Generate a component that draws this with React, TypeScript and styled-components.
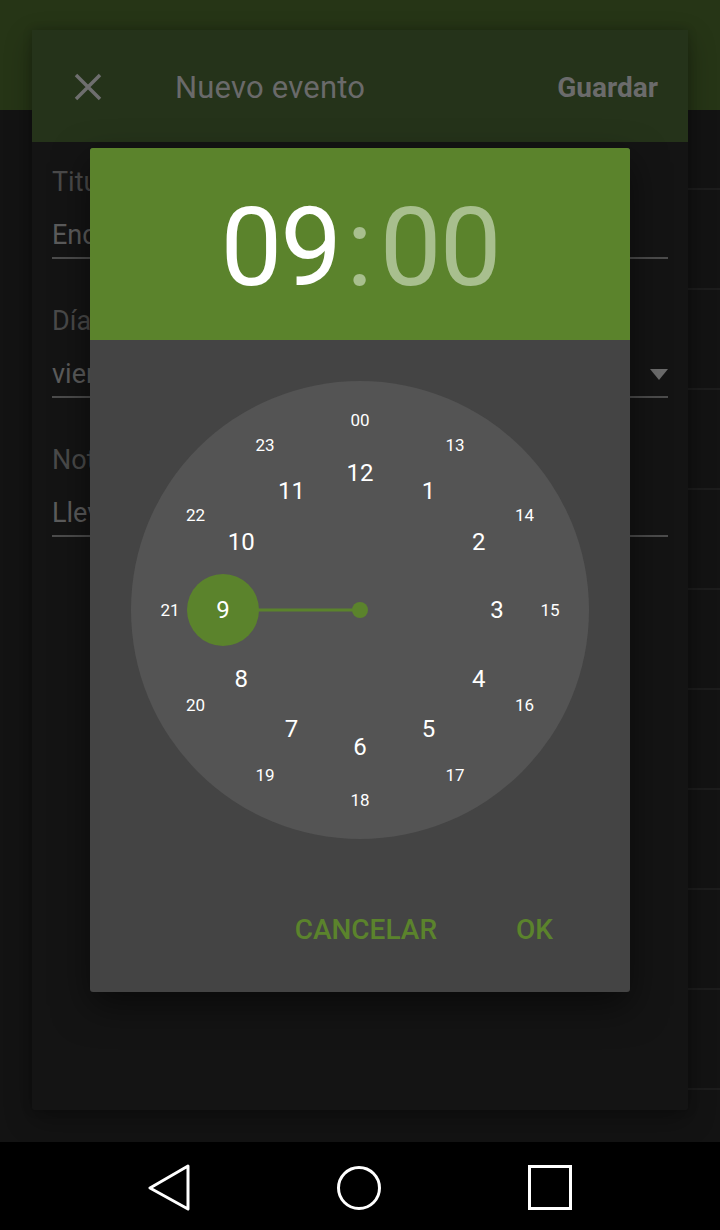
import React from "react";
import styled, { createGlobalStyle } from "styled-components";

const GlobalStyle = createGlobalStyle`
  html, body { margin: 0; padding: 0; background: #131313; }
  body { font-family: Roboto, "Noto Sans", sans-serif; -webkit-font-smoothing: antialiased; }
  * { box-sizing: border-box; }
`;

const Screen = styled.div`
  position: relative;
  width: 720px;
  height: 1230px;
  overflow: hidden;
  display: flex;
  flex-direction: column;
  background: #131313;
`;

const AppBar = styled.div`
  flex: none;
  height: 110px;
  background: #263516;
`;

const BackList = styled.div`
  flex: 1;
  min-height: 0;
  overflow: hidden;
  display: flex;
  flex-direction: column;
  padding-left: 96px;
`;

const BackRow = styled.div<{ $first?: boolean }>`
  flex: none;
  height: ${(p) => (p.$first ? 80 : 100)}px;
  border-bottom: 2px solid #1d1d1d;
`;

const NavBar = styled.nav`
  flex: none;
  height: 88px;
  background: #000;
  display: flex;
  align-items: center;
  justify-content: center;
  gap: 142px;
  padding-top: 2px;
`;

const NavIcon = styled.svg`
  width: 48px;
  height: 48px;
  display: block;
`;

const EventPanel = styled.section`
  position: absolute;
  left: 32px;
  top: 30px;
  width: 656px;
  height: 1080px;
  background: #141414;
  border-radius: 2px;
  box-shadow: 0 10px 28px rgba(0, 0, 0, 0.3), 0 0 10px rgba(0, 0, 0, 0.2);
  display: flex;
  flex-direction: column;
`;

const PanelHeader = styled.header`
  flex: none;
  height: 112px;
  background: #25331a;
  display: flex;
  align-items: center;
  padding: 2px 30px 0 42px;
`;

const CloseIcon = styled.svg`
  width: 28px;
  height: 28px;
  display: block;
  flex: none;
`;

const PanelTitle = styled.h1`
  margin: 0 0 0 73px;
  font-size: 31px;
  font-weight: 400;
  color: #6a6a6a;
  line-height: normal;
  letter-spacing: 0.2px;
`;

const SaveAction = styled.span`
  margin-left: auto;
  font-size: 28px;
  font-weight: 700;
  color: #6b6b6b;
`;

const Form = styled.div`
  display: flex;
  flex-direction: column;
  gap: 44px;
  padding: 22px 20px 0;
`;

const Field = styled.div`
  display: flex;
  flex-direction: column;
`;

const FieldLabel = styled.div`
  font-size: 27px;
  line-height: 36px;
  color: #4a4a4a;
`;

const FieldValue = styled.div`
  margin-top: 17px;
  font-size: 27px;
  line-height: 36px;
  color: #5c5c5c;
  display: flex;
  align-items: center;
  justify-content: space-between;
  padding-bottom: 4px;
  border-bottom: 2px solid #4c4c4c;
`;

const DropArrow = styled.span`
  width: 0;
  height: 0;
  border-left: 9.5px solid transparent;
  border-right: 9.5px solid transparent;
  border-top: 11px solid #6b6b6b;
`;

const TimeDialog = styled.div`
  position: absolute;
  left: 90px;
  top: 148px;
  width: 540px;
  height: 844px;
  background: #444444;
  border-radius: 3px;
  overflow: hidden;
  box-shadow: 0 14px 36px rgba(0, 0, 0, 0.5);
  display: flex;
  flex-direction: column;
`;

const TimeHeader = styled.div`
  flex: none;
  height: 192px;
  background: #5b832c;
  display: flex;
  align-items: center;
  justify-content: center;
  padding-top: 7px;
  font-size: 110px;
  line-height: 1;
  font-weight: 400;
`;

const TimePart = styled.span<{ $active?: boolean }>`
  color: ${(p) => (p.$active ? "#ffffff" : "#a8bf8e")};
  letter-spacing: -2px;
`;

const Colon = styled.span`
  color: #a8bf8e;
  margin: 0 7px 0 6px;
`;

const ClockFace = styled.div`
  position: relative;
  flex: none;
  width: 458px;
  height: 458px;
  margin: 41px auto 0;
  border-radius: 50%;
  background: #545454;
`;

const HandLayer = styled.svg`
  position: absolute;
  left: 0;
  top: 0;
  width: 458px;
  height: 458px;
`;

const DialNumber = styled.span<{ $outer?: boolean }>`
  position: absolute;
  transform: translate(-50%, -50%);
  font-size: ${(p) => (p.$outer ? 17 : 24)}px;
  line-height: 1;
  color: #ffffff;
  white-space: nowrap;
`;

const ButtonRow = styled.div`
  display: flex;
  justify-content: flex-end;
  gap: 79px;
  margin-top: 67px;
  padding-right: 77px;
`;

const TextButton = styled.button`
  background: none;
  border: 0;
  padding: 0;
  font-family: Roboto, "Noto Sans", sans-serif;
  font-size: 28px;
  font-weight: 500;
  line-height: 48px;
  color: #5b832c;
`;

const R = 229;
const inner = ["12", "1", "2", "3", "4", "5", "6", "7", "8", "9", "10", "11"];
const outer = ["00", "13", "14", "15", "16", "17", "18", "19", "20", "21", "22", "23"];

function pos(i: number, r: number) {
  const a = (i * 30 * Math.PI) / 180;
  return { left: R + r * Math.sin(a), top: R - r * Math.cos(a) };
}

export default function App() {
  return (
    <>
      <GlobalStyle />
      <Screen>
        <AppBar />
        <BackList>
          {Array.from({ length: 11 }).map((_, i) => (
            <BackRow key={i} $first={i === 0} />
          ))}
        </BackList>
        <NavBar>
          <NavIcon viewBox="0 0 48 48">
            <path d="M42 3 L4 25 L42 46 Z" fill="none" stroke="#fff" strokeWidth="3" strokeLinejoin="round" />
          </NavIcon>
          <NavIcon viewBox="0 0 48 48">
            <circle cx="23" cy="25" r="20.5" fill="none" stroke="#fff" strokeWidth="3" />
          </NavIcon>
          <NavIcon viewBox="0 0 48 48">
            <rect x="3.5" y="3.5" width="41" height="42" fill="none" stroke="#fff" strokeWidth="3" />
          </NavIcon>
        </NavBar>

        <EventPanel>
          <PanelHeader>
            <CloseIcon viewBox="0 0 28 28">
              <path d="M2 2 L26 26 M26 2 L2 26" stroke="#6e6e6e" strokeWidth="3.5" />
            </CloseIcon>
            <PanelTitle>Nuevo evento</PanelTitle>
            <SaveAction>Guardar</SaveAction>
          </PanelHeader>
          <Form>
            <Field>
              <FieldLabel>Titulo</FieldLabel>
              <FieldValue>Encuentro con amigos</FieldValue>
            </Field>
            <Field>
              <FieldLabel>Día</FieldLabel>
              <FieldValue>
                viernes, 15 de junio
                <DropArrow />
              </FieldValue>
            </Field>
            <Field>
              <FieldLabel>Notas</FieldLabel>
              <FieldValue>Llevar la cámara</FieldValue>
            </Field>
          </Form>
        </EventPanel>

        <TimeDialog>
          <TimeHeader>
            <TimePart $active>09</TimePart>
            <Colon>:</Colon>
            <TimePart>00</TimePart>
          </TimeHeader>
          <ClockFace>
            <HandLayer viewBox="0 0 458 458">
              <line x1={R - 137} y1={R} x2={R} y2={R} stroke="#5b832c" strokeWidth="3" />
              <circle cx={R - 137} cy={R} r="36" fill="#5b832c" />
              <circle cx={R} cy={R} r="8" fill="#5b832c" />
            </HandLayer>
            {outer.map((n, i) => (
              <DialNumber key={n} $outer style={pos(i, 190)}>
                {n}
              </DialNumber>
            ))}
            {inner.map((n, i) => (
              <DialNumber key={n} style={pos(i, 137)}>
                {n}
              </DialNumber>
            ))}
          </ClockFace>
          <ButtonRow>
            <TextButton>CANCELAR</TextButton>
            <TextButton>OK</TextButton>
          </ButtonRow>
        </TimeDialog>
      </Screen>
    </>
  );
}
